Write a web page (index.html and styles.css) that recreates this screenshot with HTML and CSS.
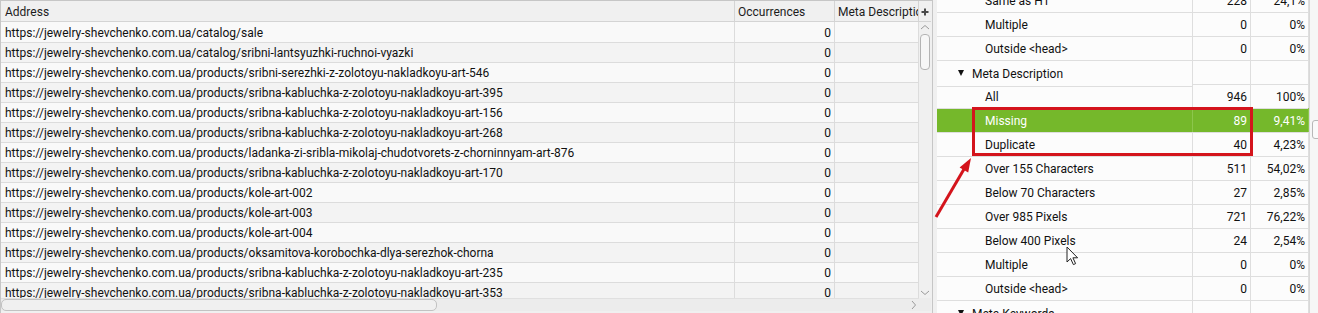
FILE: index.html
```html
<!DOCTYPE html>
<html>
<head>
    <title>SEO Spider - Meta Description</title>
    <link rel="stylesheet" href="styles.css">
</head>
<body>
<div class="screen">
    <div class="grid-panel">
        <div class="grid-head">
            <div class="cell">Address</div>
            <div class="cell">Occurrences</div>
            <div class="cell">Meta Description</div>
        </div>
        <div class="plus">
            <svg width="8" height="8" viewBox="0 0 8 8"><path d="M4 0.5V7.5M0.5 4H7.5" stroke="#4a4a4a" stroke-width="2"/></svg>
        </div>
        <div class="grid-body">
            <div class="row"><div class="cell">https://jewelry-shevchenko.com.ua/catalog/sale</div><div class="cell num">0</div><div class="cell"></div></div>
            <div class="row"><div class="cell">https://jewelry-shevchenko.com.ua/catalog/sribni-lantsyuzhki-ruchnoi-vyazki</div><div class="cell num">0</div><div class="cell"></div></div>
            <div class="row"><div class="cell">https://jewelry-shevchenko.com.ua/products/sribni-serezhki-z-zolotoyu-nakladkoyu-art-546</div><div class="cell num">0</div><div class="cell"></div></div>
            <div class="row"><div class="cell">https://jewelry-shevchenko.com.ua/products/sribna-kabluchka-z-zolotoyu-nakladkoyu-art-395</div><div class="cell num">0</div><div class="cell"></div></div>
            <div class="row"><div class="cell">https://jewelry-shevchenko.com.ua/products/sribna-kabluchka-z-zolotoyu-nakladkoyu-art-156</div><div class="cell num">0</div><div class="cell"></div></div>
            <div class="row"><div class="cell">https://jewelry-shevchenko.com.ua/products/sribna-kabluchka-z-zolotoyu-nakladkoyu-art-268</div><div class="cell num">0</div><div class="cell"></div></div>
            <div class="row"><div class="cell">https://jewelry-shevchenko.com.ua/products/ladanka-zi-sribla-mikolaj-chudotvorets-z-chorninnyam-art-876</div><div class="cell num">0</div><div class="cell"></div></div>
            <div class="row"><div class="cell">https://jewelry-shevchenko.com.ua/products/sribna-kabluchka-z-zolotoyu-nakladkoyu-art-170</div><div class="cell num">0</div><div class="cell"></div></div>
            <div class="row"><div class="cell">https://jewelry-shevchenko.com.ua/products/kole-art-002</div><div class="cell num">0</div><div class="cell"></div></div>
            <div class="row"><div class="cell">https://jewelry-shevchenko.com.ua/products/kole-art-003</div><div class="cell num">0</div><div class="cell"></div></div>
            <div class="row"><div class="cell">https://jewelry-shevchenko.com.ua/products/kole-art-004</div><div class="cell num">0</div><div class="cell"></div></div>
            <div class="row"><div class="cell">https://jewelry-shevchenko.com.ua/products/oksamitova-korobochka-dlya-serezhok-chorna</div><div class="cell num">0</div><div class="cell"></div></div>
            <div class="row"><div class="cell">https://jewelry-shevchenko.com.ua/products/sribna-kabluchka-z-zolotoyu-nakladkoyu-art-235</div><div class="cell num">0</div><div class="cell"></div></div>
            <div class="row"><div class="cell">https://jewelry-shevchenko.com.ua/products/sribna-kabluchka-z-zolotoyu-nakladkoyu-art-353</div><div class="cell num">0</div><div class="cell"></div></div>
        </div>
        <div class="vscroll">
            <svg class="chev" width="10" height="6" viewBox="0 0 10 6"><path d="M1 5L5 1.5L9 5" fill="none" stroke="#9a9a9a" stroke-width="1"/></svg>
            <div class="vthumb"></div>
            <div class="spacer"></div>
            <svg class="chev" width="10" height="6" viewBox="0 0 10 6"><path d="M1 1L5 4.5L9 1" fill="none" stroke="#9a9a9a" stroke-width="1"/></svg>
        </div>
        <div class="hscroll">
            <div class="hthumb"></div>
            <svg class="chev" width="6" height="10" viewBox="0 0 6 10"><path d="M1 1L4.5 5L1 9" fill="none" stroke="#9a9a9a" stroke-width="1"/></svg>
        </div>
        <div class="corner"></div>
    </div>

    <div class="gap"></div>

    <div class="tree-panel">
        <div class="tree">
            <div class="trow"><div class="tlabel sub">Same as H1</div><div class="tnum">228</div><div class="tnum">24,1%</div></div>
            <div class="trow"><div class="tlabel sub">Multiple</div><div class="tnum">0</div><div class="tnum">0%</div></div>
            <div class="trow"><div class="tlabel sub">Outside &lt;head&gt;</div><div class="tnum">0</div><div class="tnum">0%</div></div>
            <div class="trow"><div class="tlabel group"><span class="caret"></span>Meta Description</div><div class="tnum"></div><div class="tnum"></div></div>
            <div class="trow"><div class="tlabel sub">All</div><div class="tnum">946</div><div class="tnum">100%</div></div>
            <div class="trow selected"><div class="tlabel sub">Missing</div><div class="tnum">89</div><div class="tnum">9,41%</div></div>
            <div class="trow"><div class="tlabel sub">Duplicate</div><div class="tnum">40</div><div class="tnum">4,23%</div></div>
            <div class="trow"><div class="tlabel sub">Over 155 Characters</div><div class="tnum">511</div><div class="tnum">54,02%</div></div>
            <div class="trow"><div class="tlabel sub">Below 70 Characters</div><div class="tnum">27</div><div class="tnum">2,85%</div></div>
            <div class="trow"><div class="tlabel sub">Over 985 Pixels</div><div class="tnum">721</div><div class="tnum">76,22%</div></div>
            <div class="trow"><div class="tlabel sub">Below 400 Pixels</div><div class="tnum">24</div><div class="tnum">2,54%</div></div>
            <div class="trow"><div class="tlabel sub">Multiple</div><div class="tnum">0</div><div class="tnum">0%</div></div>
            <div class="trow"><div class="tlabel sub">Outside &lt;head&gt;</div><div class="tnum">0</div><div class="tnum">0%</div></div>
            <div class="trow"><div class="tlabel group"><span class="caret"></span>Meta Keywords</div><div class="tnum"></div><div class="tnum"></div></div>
        </div>
    </div>

    <div class="edge">
        <div class="edge-thumb"></div>
    </div>

    <!-- annotations drawn over the screenshot -->
    <div class="mark-box"></div>
    <svg class="mark-arrow" width="60" height="80" viewBox="0 0 60 80">
        <line x1="6" y1="77" x2="37" y2="24" stroke="#d4141c" stroke-width="3"/>
        <polygon points="41,18 29.6,27.5 38.2,32.6" fill="#d4141c"/>
    </svg>
    <svg class="cursor" width="14" height="20" viewBox="0 0 14 20">
        <path d="M1 1V16L4.6 12.6L7.4 18.6L9.6 17.6L6.9 11.8H11.6Z" fill="#fff" stroke="#222" stroke-width="1" stroke-linejoin="round"/>
    </svg>
</div>
</body>
</html>
```

FILE: styles.css
```css
body {
    margin: 0;
    background-color: #f0f0f0;
    font-family: Roboto, "Liberation Sans", sans-serif;
    font-size: 12px;
    color: #111;
}

.screen {
    position: relative;
    display: flex;
    width: 1318px;
    height: 313px;
    overflow: hidden;
}

/* left grid */
.grid-panel {
    width: 931px;
    height: 312px;
    border: 1px solid #c6c6c6;
    display: grid;
    grid-template-columns: 918px 12px;
    grid-template-rows: 21px 276px 13px;
    flex-shrink: 0;
}

.grid-head {
    display: grid;
    grid-template-columns: 734px 100px 84px;
    background-color: #f0f0f0;
    border-bottom: 1px solid #d4d4d4;
}

.grid-head .cell {
    height: 20px;
    line-height: 23px;
    padding: 0 3px;
    border-right: 1px solid #d4d4d4;
    white-space: nowrap;
    overflow: hidden;
    color: #1c1c1c;
}

.grid-head .cell:first-child {
    padding-left: 4px;
}

.plus {
    display: flex;
    align-items: center;
    justify-content: center;
    background-color: #f0f0f0;
    border-bottom: 1px solid #d4d4d4;
    padding-top: 2px;
}

.grid-body {
    overflow: hidden;
}

.row {
    display: grid;
    grid-template-columns: 734px 100px 84px;
    height: 20px;
    background-color: #f9f9f9;
}

.row:nth-child(even) {
    background-color: #f3f3f3;
}

.row .cell {
    height: 20px;
    line-height: 22px;
    padding: 0 4px;
    border-right: 1px solid #dcdcdc;
    border-bottom: 1px solid #dcdcdc;
    white-space: nowrap;
    overflow: hidden;
}

.row .cell.num {
    text-align: right;
    padding-right: 3px;
}

.vscroll {
    display: flex;
    flex-direction: column;
    align-items: center;
    background-color: #f0f0f0;
    padding: 2px 0 2px;
}

.vthumb {
    width: 8px;
    height: 34px;
    margin-top: 4px;
    border: 1px solid #b4b4b4;
    border-radius: 4px;
    background-color: #f7f7f7;
}

.spacer {
    flex: 1;
}

.hscroll {
    display: flex;
    align-items: center;
    background-color: #ececec;
    border-top: 1px solid #e0e0e0;
    padding-right: 2px;
}

.hthumb {
    width: 434px;
    height: 10px;
    border: 1px solid #c2c2c2;
    border-radius: 5px;
    background-color: #f0f0f0;
}

.hscroll .chev {
    margin-left: auto;
}

.corner {
    background-color: #ececec;
}

.gap {
    width: 4px;
    flex-shrink: 0;
}

/* right tree */
.tree-panel {
    width: 372px;
    flex-shrink: 0;
    overflow: hidden;
    background-color: #fcfcfc;
}

.tree {
    margin-top: -12px;
}

.trow {
    display: grid;
    grid-template-columns: 256px 58px 58px;
    height: 24px;
}

.trow > div {
    height: 24px;
    border-bottom: 1px solid #dedede;
    border-right: 1px solid #dedede;
    line-height: 26px;
    white-space: nowrap;
    overflow: hidden;
}

.tlabel.sub {
    padding-left: 48px;
}

.tlabel.group {
    padding-left: 21px;
    display: flex;
    align-items: center;
    padding-top: 2px;
}

.caret {
    width: 0;
    height: 0;
    border-left: 3.5px solid transparent;
    border-right: 3.5px solid transparent;
    border-top: 6px solid #111;
    margin-right: 8px;
    margin-top: -2px;
}

.tnum {
    text-align: right;
    padding-right: 3px;
}

.trow.selected {
    background-color: #75b82b;
    color: #ffffff;
}

.trow.selected > div {
    border-right-color: #8cc64c;
}

.edge {
    flex: 1;
    background-color: #f6f6f6;
    border-left: 1px solid #d8d8d8;
    padding-top: 120px;
    padding-left: 2px;
}

.edge-thumb {
    width: 12px;
    height: 17px;
    border: 1px solid #b8b8b8;
    border-radius: 3px;
    background-color: #fafafa;
}

/* annotations */
.mark-box {
    position: absolute;
    left: 972px;
    top: 107px;
    width: 275px;
    height: 43px;
    border: 3px solid #d4141c;
}

.mark-arrow {
    position: absolute;
    left: 930px;
    top: 140px;
}

.cursor {
    position: absolute;
    left: 1066px;
    top: 246px;
}
```
